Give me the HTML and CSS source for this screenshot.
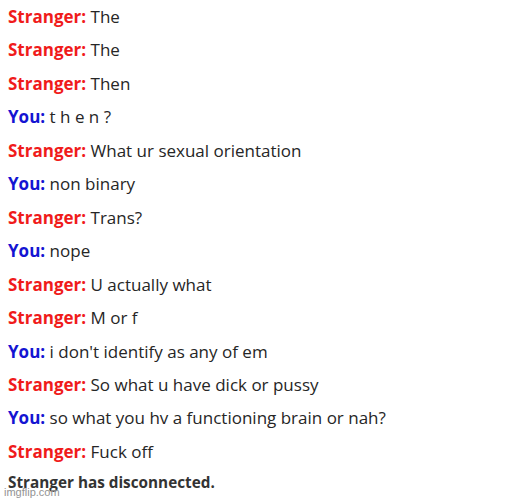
FILE: index.html
```html
<!DOCTYPE html>
<html>
<head>
<meta charset="utf-8">
<link rel="stylesheet" href="styles.css">
</head>
<body>
<div class="log">
  <p class="msg"><b class="s">Stranger:</b> The</p>
  <p class="msg"><b class="s">Stranger:</b> The</p>
  <p class="msg"><b class="s">Stranger:</b> Then</p>
  <p class="msg"><b class="y">You:</b> t h e n ?</p>
  <p class="msg"><b class="s">Stranger:</b> What ur sexual orientation</p>
  <p class="msg"><b class="y">You:</b> non binary</p>
  <p class="msg"><b class="s">Stranger:</b> Trans?</p>
  <p class="msg"><b class="y">You:</b> nope</p>
  <p class="msg"><b class="s">Stranger:</b> U actually what</p>
  <p class="msg"><b class="s">Stranger:</b> M or f</p>
  <p class="msg"><b class="y">You:</b> i don't identify as any of em</p>
  <p class="msg"><b class="s">Stranger:</b> So what u have dick or pussy</p>
  <p class="msg"><b class="y">You:</b> so what you hv a functioning brain or nah?</p>
  <p class="msg"><b class="s">Stranger:</b> Fuck off</p>
  <p class="status">Stranger has disconnected.</p>
</div>
<div class="wm">imgflip.com</div>
</body>
</html>
```
FILE: styles.css
```css
html, body {
  margin: 0;
  padding: 0;
  background: #fff;
  height: 499px;
  overflow: hidden;
}
body {
  position: relative;
  font-family: "Open Sans", "Noto Sans", sans-serif;
  font-size: 17px;
  color: #262626;
}
.log {
  padding-left: 8px;
}
.msg {
  margin: 0;
  height: 33.46px;
  line-height: 34.5px;
  white-space: nowrap;
}
.s { color: #f01b1b; font-weight: 700; }
.y { color: #1414d2; font-weight: 700; }
.status {
  margin: 0;
  line-height: 28.5px;
  font-size: 15.3px;
  font-weight: 700;
  color: #333;
}
.wm {
  position: absolute;
  left: 4px;
  bottom: 1px;
  font-family: "Liberation Sans", sans-serif;
  font-size: 11px;
  color: #888;
  text-shadow: 0 0 1px #fff;
  opacity: 0.9;
}
```
